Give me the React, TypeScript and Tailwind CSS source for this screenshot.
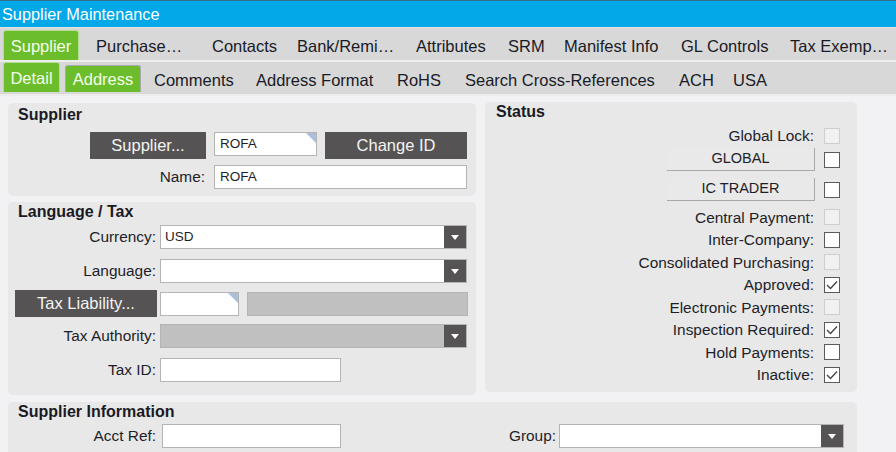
import React from "react";

const font = { fontFamily: '"Liberation Sans", Arial, sans-serif' };

function Arrow() {
  return (
    <div className="w-[22px] h-full bg-[#555353] flex items-center justify-center">
      <svg width="8" height="5" viewBox="0 0 8 5">
        <path d="M0 0 H8 L4 5 Z" fill="#ffffff" />
      </svg>
    </div>
  );
}

function Select({ w, gray, value }: { w: number; gray?: boolean; value?: string }) {
  return (
    <div
      className={`h-[24px] border border-[#b4b4b4] flex items-stretch ${gray ? "bg-[#c0c0c0]" : "bg-white"}`}
      style={{ width: w }}
    >
      <div className="flex-1 flex items-center pl-[4px] text-[13.5px] text-[#1e1e2a]">{value}</div>
      <Arrow />
    </div>
  );
}

function Input({ w, value, corner, gray }: { w: number; value?: string; corner?: boolean; gray?: boolean }) {
  return (
    <div
      className={`relative h-[24px] border border-[#b4b4b4] flex items-center pl-[5px] text-[13.5px] text-[#1e1e2a] ${gray ? "bg-[#c0c0c0]" : "bg-white"}`}
      style={{ width: w }}
    >
      {value}
      {corner && (
        <svg className="absolute top-0 right-0" width="10" height="10" viewBox="0 0 10 10">
          <path d="M0 0 H10 V10 Z" fill="#a9bfdc" />
        </svg>
      )}
    </div>
  );
}

function DarkButton({ w, label }: { w: number; label: string }) {
  return (
    <div
      className="h-[27px] bg-[#555353] text-[#f4f4f4] text-[16.5px] flex items-center justify-center"
      style={{ width: w }}
    >
      {label}
    </div>
  );
}

function Check({ state }: { state: "disabled" | "off" | "on" }) {
  if (state === "disabled")
    return <div className="w-[16px] h-[16px] border border-[#cfcfcf] bg-[#f1f1f1]" />;
  return (
    <div className="w-[16px] h-[16px] border-[1.5px] border-[#5a5a5a] bg-white flex items-center justify-center">
      {state === "on" && (
        <svg width="12" height="10" viewBox="0 0 12 10">
          <path d="M1 5 L4.5 8.5 L11 1.5" fill="none" stroke="#444" strokeWidth="1.4" />
        </svg>
      )}
    </div>
  );
}

function StatusRow({ label, state, h = 22.5 }: { label: string; state: "disabled" | "off" | "on"; h?: number }) {
  return (
    <div className="flex items-center justify-end" style={{ height: h }}>
      <span className="text-[15.4px] text-[#1e1e2a] mr-[10px]">{label}</span>
      <Check state={state} />
    </div>
  );
}

function StatusButton({ label, state }: { label: string; state: "off" }) {
  return (
    <div className="flex items-center justify-end">
      <div className="w-[148px] h-[23px] border-r border-b border-[#a8a8a8] bg-[#e9e9e9] flex items-center justify-center text-[14.5px] text-[#1e1e2a] mr-[9px]">
        {label}
      </div>
      <Check state={state} />
    </div>
  );
}

const row1 = [
  { x: 96, t: "Purchase…" },
  { x: 212, t: "Contacts" },
  { x: 297, t: "Bank/Remi…" },
  { x: 416, t: "Attributes" },
  { x: 508, t: "SRM" },
  { x: 564, t: "Manifest Info" },
  { x: 681, t: "GL Controls" },
  { x: 790, t: "Tax Exemp…" },
];
const row2 = [
  { x: 154, t: "Comments" },
  { x: 256, t: "Address Format" },
  { x: 397, t: "RoHS" },
  { x: 465, t: "Search Cross-References" },
  { x: 679, t: "ACH" },
  { x: 733, t: "USA" },
];

function TabTexts({ items, start, end }: { items: { x: number; t: string }[]; start: number; end: number }) {
  return (
    <>
      {items.map((it, i) => {
        const next = i + 1 < items.length ? items[i + 1].x : end;
        const ml = i === 0 ? it.x - start : 0;
        return (
          <div
            key={it.t}
            className="text-[16.5px] text-[#1a1a26] whitespace-nowrap overflow-hidden shrink-0"
            style={{ marginLeft: ml, width: next - it.x }}
          >
            {it.t}
          </div>
        );
      })}
    </>
  );
}

const label = "text-right text-[15.4px] text-[#1e1e2a]";

export default function App() {
  return (
    <div className="w-[896px] h-[452px] overflow-hidden bg-[#f2f2f4]" style={font}>
      {/* Title bar */}
      <div className="h-[27px] bg-[#02a8e8] border-t border-[#2f6f8c] flex items-center pl-[2px] text-[16.3px] text-white">
        Supplier Maintenance
      </div>
      <div className="h-[1px] bg-[#e4e4e4]" />
      {/* Tab row 1 */}
      <div className="h-[34px] bg-[#d8d8d8] flex items-end pl-[3px] border-b-[2px] border-[#ededed]">
        <div className="w-[76px] h-[30px] bg-[#6cbd2c] border border-[#b5dd98] border-b-0 rounded-t-[3px] flex items-center justify-center text-[16.5px] text-[#f3ffe8] shrink-0 pt-[1px]">
          Supplier
        </div>
        <div className="flex items-center h-full pt-[5px]">
          <TabTexts items={row1} start={79} end={896} />
        </div>
      </div>
      {/* Tab row 2 */}
      <div className="h-[34px] bg-[#d8d8d8] flex items-end pl-[3px] border-b-[2px] border-[#ececec]">
        <div className="w-[57px] h-[30px] bg-[#6cbd2c] border border-[#b5dd98] border-b-0 rounded-t-[3px] flex items-center justify-center text-[16.5px] text-[#f3ffe8] shrink-0 pt-[1px] mb-[2px]">
          Detail
        </div>
        <div className="ml-[5px] w-[76px] h-[27px] bg-[#6cbd2c] border border-[#a9a9a9] border-b-0 rounded-t-[3px] flex items-center justify-center text-[16.5px] text-[#f3ffe8] shrink-0 pt-[1px] mb-[2px]">
          Address
        </div>
        <div className="flex items-center h-full pt-[4px]">
          <TabTexts items={row2} start={141} end={896} />
        </div>
      </div>

      {/* Content */}
      <div className="pl-[8px] pt-[7px]">
        <div className="flex gap-[9px]">
          {/* Left column */}
          <div className="w-[468px] flex flex-col gap-[6px]">
            {/* Supplier panel */}
            <div className="h-[93px] bg-[#e8e8e8] rounded-[5px] pl-[10px] pt-[2px]">
              <div className="text-[16px] font-bold text-[#1a1a24] leading-[20px]">Supplier</div>
              <div className="flex mt-[7px] ml-[72px] gap-[8px]">
                <DarkButton w={116} label="Supplier..." />
                <Input w={103} value="ROFA" corner />
                <DarkButton w={142} label="Change ID" />
              </div>
              <div className="flex items-center mt-[6px]">
                <div className={`w-[187px] ${label}`}>Name:</div>
                <div className="ml-[9px]">
                  <Input w={253} value="ROFA" />
                </div>
              </div>
            </div>
            {/* Language / Tax panel */}
            <div className="h-[193px] bg-[#e8e8e8] rounded-[5px] pl-[10px] pt-[0px]">
              <div className="text-[16px] font-bold text-[#1a1a24] leading-[20px]">Language / Tax</div>
              <div className="flex items-center mt-[3px]">
                <div className={`w-[138px] ${label}`}>Currency:</div>
                <div className="ml-[4px]">
                  <Select w={307} value="USD" />
                </div>
              </div>
              <div className="flex items-center mt-[10px]">
                <div className={`w-[138px] ${label}`}>Language:</div>
                <div className="ml-[4px]">
                  <Select w={307} />
                </div>
              </div>
              <div className="flex items-center mt-[7px] -ml-[3px]">
                <DarkButton w={142} label="Tax Liability..." />
                <div className="ml-[3px]">
                  <Input w={79} corner />
                </div>
                <div className="ml-[8px]">
                  <Input w={221} gray />
                </div>
              </div>
              <div className="flex items-center mt-[7px]">
                <div className={`w-[138px] ${label}`}>Tax Authority:</div>
                <div className="ml-[4px]">
                  <Select w={307} gray />
                </div>
              </div>
              <div className="flex items-center mt-[10px]">
                <div className={`w-[138px] ${label}`}>Tax ID:</div>
                <div className="ml-[4px]">
                  <Input w={181} />
                </div>
              </div>
            </div>
          </div>
          {/* Status panel */}
          <div className="w-[372px] h-[290px] -mt-[1px] bg-[#e8e8e8] rounded-[5px] pl-[11px] pr-[17px]">
            <div className="text-[16px] font-bold text-[#1a1a24] leading-[20px]">Status</div>
            <div className="mt-[2px]">
              <StatusRow label="Global Lock:" state="disabled" h={24} />
              <StatusButton label="GLOBAL" state="off" />
              <div className="h-[7px]" />
              <StatusButton label="IC TRADER" state="off" />
              <div className="h-[5px]" />
              <StatusRow label="Central Payment:" state="disabled" />
              <StatusRow label="Inter-Company:" state="off" />
              <StatusRow label="Consolidated Purchasing:" state="disabled" />
              <StatusRow label="Approved:" state="on" />
              <StatusRow label="Electronic Payments:" state="disabled" />
              <StatusRow label="Inspection Required:" state="on" />
              <StatusRow label="Hold Payments:" state="off" />
              <StatusRow label="Inactive:" state="on" />
            </div>
          </div>
        </div>
        {/* Supplier Information */}
        <div className="mt-[7px] w-[849px] h-[60px] bg-[#e8e8e8] rounded-[5px] pl-[10px] pt-[0px]">
          <div className="text-[16px] font-bold text-[#1a1a24] leading-[20px]">Supplier Information</div>
          <div className="flex items-center mt-[2px]">
            <div className={`w-[138px] ${label}`}>Acct Ref:</div>
            <div className="ml-[6px]">
              <Input w={179} />
            </div>
            <div className={`w-[215px] ${label}`}>Group:</div>
            <div className="ml-[3px]">
              <Select w={285} />
            </div>
          </div>
        </div>
      </div>
    </div>
  );
}
